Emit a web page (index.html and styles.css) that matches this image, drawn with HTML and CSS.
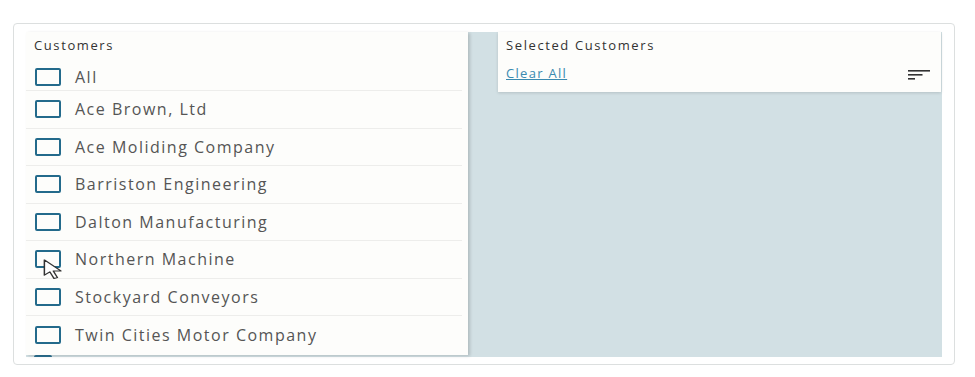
FILE: index.html
```html
<!DOCTYPE html>
<html>
<head>
<meta charset="utf-8">
<link rel="stylesheet" href="styles.css">
</head>
<body>
<div class="card">
  <div class="inner">
    <div class="left-col">
      <div class="panel left">
        <div class="head">Customers</div>
        <div class="row first"><span class="box"></span><span class="label">All</span></div>
        <div class="row"><span class="box"></span><span class="label">Ace Brown, Ltd</span></div>
        <div class="row"><span class="box"></span><span class="label">Ace Moliding Company</span></div>
        <div class="row"><span class="box"></span><span class="label">Barriston Engineering</span></div>
        <div class="row"><span class="box"></span><span class="label">Dalton Manufacturing</span></div>
        <div class="row"><span class="box"></span><span class="label">Northern Machine</span>
          <svg class="cursor" width="22" height="21" viewBox="0 0 16 22" preserveAspectRatio="none"><path d="M1 1 L1 17 L5 13.5 L8 20.5 L10.5 19.5 L7.5 12.5 L13 12.5 Z" fill="#fff" stroke="#333" stroke-width="1.1" stroke-linejoin="round"/></svg>
        </div>
        <div class="row"><span class="box"></span><span class="label">Stockyard Conveyors</span></div>
        <div class="row"><span class="box"></span><span class="label">Twin Cities Motor Company</span></div>
      </div>
      <div class="peek"></div>
    </div>
    <div class="panel right">
      <div class="head">Selected Customers</div>
      <div class="actions">
        <a class="clear" href="#">Clear All</a>
        <svg class="sort" width="23" height="10" viewBox="0 0 23 10"><rect x="0" y="0" width="22" height="1.6" fill="#333"/><rect x="0" y="4" width="14.5" height="1.6" fill="#333"/><rect x="0" y="8" width="7" height="1.6" fill="#333"/></svg>
      </div>
    </div>
  </div>
</div>
</body>
</html>
```

FILE: styles.css
```css
* { box-sizing: border-box; }
body {
  margin: 0;
  background: #ffffff;
  font-family: "Open Sans", "Liberation Sans", sans-serif;
}
.card {
  margin: 23px 0 0 13px;
  width: 942px;
  height: 342px;
  border: 1px solid #dcdfdf;
  border-radius: 4px;
  padding: 8px 12px 7px 12px;
}
.inner {
  display: flex;
  height: 325px;
  background: #d2e0e4;
}
.left-col {
  display: flex;
  flex-direction: column;
  width: 442px;
}
.panel {
  background: #fdfdfb;
}
.left {
  height: 323px;
  box-shadow: 2px 1px 3px rgba(0, 0, 0, 0.16);
  position: relative;
}
.peek {
  margin-left: 8px;
  width: 18px;
  height: 2px;
  background: #2a6f90;
  border-radius: 9px 9px 0 0;
}
.head {
  font-size: 13px;
  color: #333;
  letter-spacing: 1.6px;
  height: 31px;
  padding: 4px 0 0 8px;
}
.row {
  display: flex;
  align-items: center;
  height: 37.5px;
  padding-left: 9px;
  border-bottom: 1px solid #ededeb;
  margin-right: 6px;
  position: relative;
}
.row.first { height: 28px; }
.row:last-child { border-bottom: none; }
.box {
  width: 26px;
  height: 18px;
  border: 2px solid #236a8b;
  border-radius: 2px;
  flex: none;
}
.label {
  margin-left: 14px;
  font-size: 16px;
  color: #555;
  letter-spacing: 1.5px;
}
.cursor {
  position: absolute;
  left: 17px;
  top: 18px;
}
.right {
  margin-left: 30px;
  width: 443px;
  height: 60px;
  box-shadow: 0 1px 3px rgba(0, 0, 0, 0.14);
}
.right .head {
  height: 32px;
}
.actions {
  display: flex;
  justify-content: space-between;
  align-items: flex-start;
  padding: 0 10px 0 8px;
}
.clear {
  font-size: 13px;
  color: #3a8ab0;
  letter-spacing: 1.3px;
  text-decoration: underline;
}
.sort {
  margin-top: 6px;
}
```
